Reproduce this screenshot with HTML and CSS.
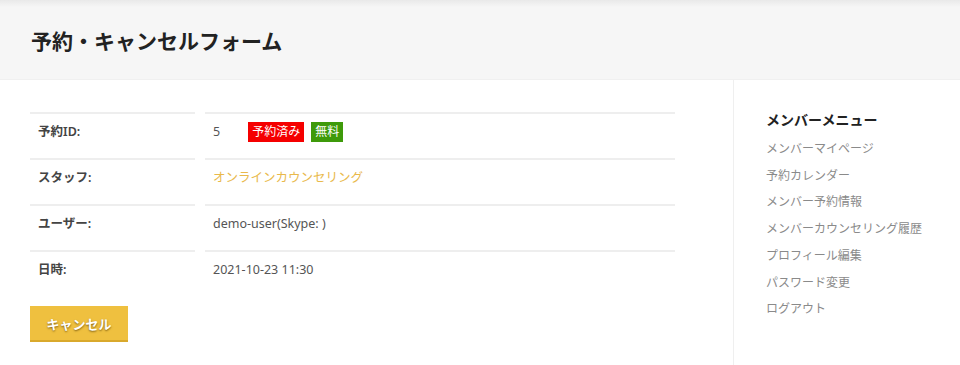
FILE: index.html
```html
<!DOCTYPE html>
<html lang="ja">
<head>
  <meta charset="UTF-8">
  <title>予約・キャンセルフォーム</title>
  <link rel="stylesheet" href="styles.css">
</head>
<body>
<header class="page-head">
  <h1>予約・キャンセルフォーム</h1>
</header>
<div class="page">
  <main class="main">
    <div class="info">
      <div class="cell label">予約ID:</div>
      <div class="cell value">5 <span class="badge red">予約済み</span><span class="badge green">無料</span></div>
      <div class="cell label">スタッフ:</div>
      <div class="cell value"><a href="#" class="staff">オンラインカウンセリング</a></div>
      <div class="cell label">ユーザー:</div>
      <div class="cell value">demo-user(Skype: )</div>
      <div class="cell label">日時:</div>
      <div class="cell value">2021-10-23 11:30</div>
    </div>
    <button class="btn-cancel">キャンセル</button>
  </main>
  <aside class="side">
    <h3>メンバーメニュー</h3>
    <ul>
      <li><a href="#">メンバーマイページ</a></li>
      <li><a href="#">予約カレンダー</a></li>
      <li><a href="#">メンバー予約情報</a></li>
      <li><a href="#">メンバーカウンセリング履歴</a></li>
      <li><a href="#">プロフィール編集</a></li>
      <li><a href="#">パスワード変更</a></li>
      <li><a href="#">ログアウト</a></li>
    </ul>
  </aside>
</div>
</body>
</html>
```

FILE: styles.css
```css
body { margin: 0; font-family: "Noto Sans", "Noto Sans CJK JP", sans-serif; color: #333; background: #fff; }
a { text-decoration: none; }

.page-head {
  height: 79px;
  background: linear-gradient(#e9e9e9 0, #f6f6f6 7px, #f6f6f6 100%);
  display: flex;
  align-items: center;
  padding-left: 31px;
  border-bottom: 1px solid #f0f0f0;
}
.page-head h1 { margin: 0; font-size: 21px; font-weight: 700; color: #222; }

.page { display: flex; min-height: 285px; }
.main { flex: 0 0 733px; padding: 32px 0 0 30px; box-sizing: border-box; }
.side {
  flex: 1;
  border-left: 1px solid #efefef;
  padding: 28px 0 0 32px;
}

.info {
  display: grid;
  grid-template-columns: 165px 470px;
  column-gap: 10px;
  width: 645px;
}
.cell {
  border-top: 2px solid #eee;
  padding: 8px 8px 16px;
  line-height: 20px;
  font-size: 12.5px;
  height: 20px;
  display: flex;
  align-items: center;
}
.label { font-weight: 600; color: #444; }
.value { color: #555; }
.staff { color: #e9b94b; }

.badge {
  display: inline-block;
  color: #fff;
  font-size: 12px;
  line-height: 20px;
  padding: 0 4px;
  font-family: "Liberation Serif", "Noto Sans CJK JP", serif;
}
.badge.red { background: #f50000; margin-left: 28px; }
.badge.green { background: #3e9a0a; margin-left: 7px; }

.btn-cancel {
  margin-top: 10px;
  width: 98px;
  height: 36px;
  background: #efc03f;
  border: none;
  border-bottom: 2px solid #d9a92c;
  color: #fff;
  font-family: "Noto Sans CJK JP", sans-serif;
  font-size: 13px;
  font-weight: 700;
  text-shadow: 0 1px 2px #7a5a10;
  cursor: pointer;
}

.side h3 { margin: 0 0 4px; font-size: 14px; font-weight: 700; color: #222; line-height: 24px; }
.side ul { list-style: none; margin: 0; padding: 0; }
.side li { font-size: 12px; line-height: 26.7px; }
.side a { color: #8a8a8a; }
```
